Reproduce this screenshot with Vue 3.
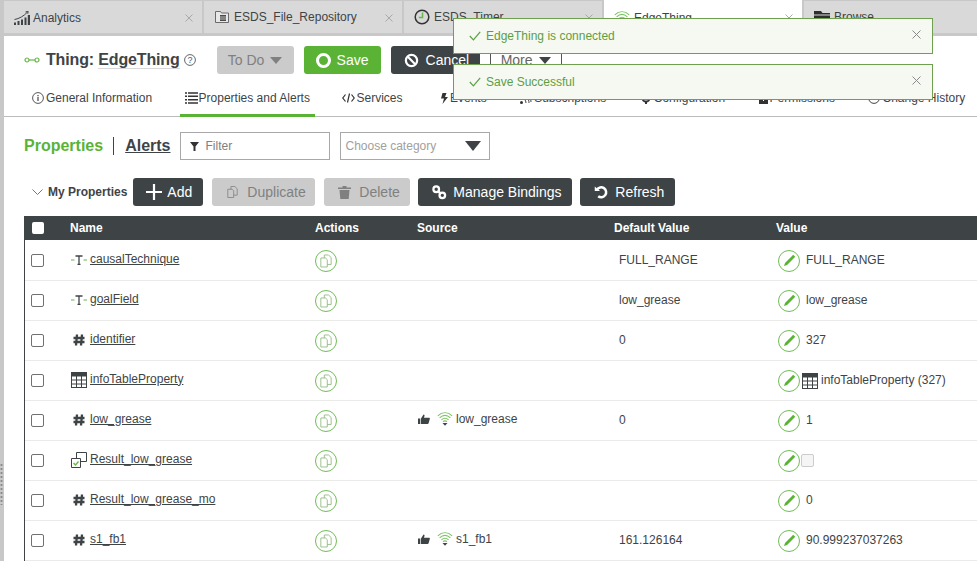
<script setup>
const tabs = [
  { label: 'Analytics', icon: 'chart' },
  { label: 'ESDS_File_Repository', icon: 'repo' },
  { label: 'ESDS_Timer', icon: 'clock' },
  { label: 'EdgeThing', icon: 'wifi', active: true },
  { label: 'Browse', icon: 'folder', last: true }
]
const nav = [
  { label: 'General Information', icon: 'info' },
  { label: 'Properties and Alerts', icon: 'list', active: true },
  { label: 'Services', icon: 'code' },
  { label: 'Events', icon: 'bolt' },
  { label: 'Subscriptions', icon: 'subs' },
  { label: 'Configuration', icon: 'gear' },
  { label: 'Permissions', icon: 'lock' },
  { label: 'Change History', icon: 'history' }
]
const rows = [
  { name: 'causalTechnique', type: 'text', def: 'FULL_RANGE', value: 'FULL_RANGE' },
  { name: 'goalField', type: 'text', def: 'low_grease', value: 'low_grease' },
  { name: 'identifier', type: 'num', def: '0', value: '327' },
  { name: 'infoTableProperty', type: 'table', def: '', value: 'infoTableProperty (327)', valueTable: true },
  { name: 'low_grease', type: 'num', source: 'low_grease', def: '0', value: '1' },
  { name: 'Result_low_grease', type: 'bool', def: '', value: '', valueCheck: true },
  { name: 'Result_low_grease_mo', type: 'num', def: '', value: '0' },
  { name: 's1_fb1', type: 'num', source: 's1_fb1', def: '161.126164', value: '90.999237037263' }
]
const toasts = ['EdgeThing is connected', 'Save Successful']
</script>

<template>
  <div class="page">
    <svg width="0" height="0" class="defs">
      <defs>
        <symbol id="i-copy" viewBox="0 0 14 16">
          <path d="M1 4.500h5.500l2 2V15H1z M5 4.500V1h5l3 3v8h-4.500" fill="none" stroke="currentColor" stroke-width="1" />
        </symbol>
        <symbol id="i-pencil" viewBox="0 0 14 14">
          <path d="M11 .8l2.200 2.200-8.800 8.800-3.400 1.200 1.200-3.400z" fill="currentColor" />
        </symbol>
        <symbol id="i-table" viewBox="0 0 16 16">
          <path d="M0 0h16v16H0z" fill="#3e4446" />
          <path d="M1 4.500h4v3H1zM6 4.500h4v3H6zM11 4.500h4v3h-4zM1 8.500h4v3H1zM6 8.500h4v3H6zM11 8.500h4v3h-4zM1 12.500h4V15H1zM6 12.500h4V15H6zM11 12.500h4V15h-4z" fill="#fff" />
        </symbol>
        <symbol id="i-wifi" viewBox="0 0 16 14">
          <path d="M.8 3.800c4.400-4 10-4 14.400 0M2.600 5.800c3.400-3 7.400-3 10.800 0M4.400 7.800c2.400-2 4.800-2 7.200 0M6 9.600c1.300-1 2.700-1 4 0" fill="none" stroke="#7cc463" stroke-width="1.100" />
          <path d="M5.500 11h5l-2.500 2.800z" fill="#3e4446" />
        </symbol>
        <symbol id="i-thumb" viewBox="0 0 12 10">
          <path d="M0 4.500h2.300V10H0zM3 4.500L5.500 0.500c1 0 1.300.8.900 1.800L6 3.800h5c.8 0 1 .6.800 1.200L10.600 9.300c-.2.500-.5.700-1 .700H3z" fill="#3e4446" />
        </symbol>
      </defs>
    </svg>

    <aside class="rail">
      <span class="grip"></span>
    </aside>

    <main class="main">
      <div class="tabs">
        <div v-for="t in tabs" :key="t.label" class="tab" :class="{ active: t.active, last: t.last }">
          <svg v-if="t.icon === 'chart'" class="tab-icon chart" width="16" height="14" viewBox="0 0 16 14">
            <path d="M0 11.500h2V14H0zM3.500 10h2v4h-2zM7 8.500h2V14H7zM10.500 6.500h2V14h-2zM13.800 4h2.200v10h-2.200z" fill="#3e4446" />
            <path d="M.5 8.500C5 7.800 10 5 13.500 1M11.500 1l2.600-.8-.3 2.600" fill="none" stroke="#3e4446" stroke-width="1" />
          </svg>
          <svg v-else-if="t.icon === 'repo'" class="tab-icon" width="16" height="14" viewBox="0 0 16 14">
            <path d="M1.500 1.500h5l1 1.500h7v9.500h-13z" fill="#e8e8e8" stroke="#6b6b6b" />
            <path d="M6 5h6v6H6z" fill="#4a4a4a" />
            <path d="M6 7h6M6 9h6" stroke="#ddd" stroke-width=".8" />
          </svg>
          <svg v-else-if="t.icon === 'clock'" class="tab-icon" width="16" height="16" viewBox="0 0 16 16">
            <circle cx="8" cy="8" r="6.800" fill="none" stroke="#333" stroke-width="1.500" />
            <path d="M8.500 3.500v5H4.800" fill="none" stroke="#66b848" stroke-width="1.500" />
          </svg>
          <svg v-else-if="t.icon === 'wifi'" class="tab-icon" width="16" height="14"><use href="#i-wifi" /></svg>
          <svg v-else class="tab-icon" width="16" height="13" viewBox="0 0 16 13">
            <path d="M0 0h7l1.500 2H16v1.500H0zM0 4.500h16V13H0z" fill="#2e2e2e" />
          </svg>
          <span class="tab-label">{{ t.label }}</span>
          <svg v-if="!t.last" class="tab-x" width="8" height="8" viewBox="0 0 8 8"><path d="M.5.500l7 7M7.500.500l-7 7" stroke="#a8a8a8" stroke-width="1" /></svg>
        </div>
      </div>

      <div class="title-row">
        <svg class="thing-icon" width="16" height="6" viewBox="0 0 16 6">
          <circle cx="3" cy="3" r="2" fill="none" stroke="#66b848" stroke-width="1.200" />
          <circle cx="13" cy="3" r="2" fill="none" stroke="#66b848" stroke-width="1.200" />
          <path d="M5 3h6" stroke="#66b848" stroke-width="1.200" />
        </svg>
        <h1 class="title">Thing: <span class="title-name">EdgeThing</span></h1>
        <svg class="help" width="12" height="12" viewBox="0 0 12 12">
          <circle cx="6" cy="6" r="5.400" fill="none" stroke="#555" stroke-width=".9" />
          <text x="6" y="9" text-anchor="middle" class="help-q">?</text>
        </svg>
        <button class="btn btn-todo">To Do <span class="caret caret-grey"></span></button>
        <button class="btn btn-save"><span class="ring"></span>Save</button>
        <button class="btn btn-cancel">
          <svg width="15" height="15" viewBox="0 0 16 16"><circle cx="8" cy="8" r="6" fill="none" stroke="#fff" stroke-width="2.400" /><path d="M3.800 3.800l8.400 8.400" stroke="#fff" stroke-width="2.400" /></svg>
          Cancel
        </button>
        <button class="btn btn-more">More <span class="caret"></span></button>
      </div>

      <nav class="nav">
        <a v-for="n in nav" :key="n.label" class="nav-item" :class="[n.icon, { active: n.active }]">
          <svg v-if="n.icon === 'info'" width="12" height="12" viewBox="0 0 12 12"><circle cx="6" cy="6" r="5.400" fill="none" stroke="#444" stroke-width=".9" /><path d="M6 5v4M6 3v1.200" stroke="#444" stroke-width="1.200" /></svg>
          <svg v-else-if="n.icon === 'list'" width="13" height="12" viewBox="0 0 13 12"><path d="M0 1h2M3 1h10M0 4.300h2M3 4.300h10M0 7.700h2M3 7.700h10M0 11h2M3 11h10" stroke="#333" stroke-width="1.500" /></svg>
          <svg v-else-if="n.icon === 'code'" width="13" height="10" viewBox="0 0 13 10"><path d="M3.500 1.500L.8 5l2.700 3.500M9.500 1.500L12.200 5 9.500 8.500M7.500.5l-2 9" fill="none" stroke="#333" stroke-width="1.200" /></svg>
          <svg v-else-if="n.icon === 'bolt'" width="8" height="11" viewBox="0 0 8 11"><path d="M2.500 0h4L5 4h3l-5.500 7L4 5.500H1z" fill="#333" /></svg>
          <svg v-else-if="n.icon === 'subs'" width="12" height="12" viewBox="0 0 12 12"><path d="M1 6c3 0 5 2 5 5M1 3c5 0 8 3 8 8M3 1c4 0 8 3 8 9" fill="none" stroke="#444" /><circle cx="1.500" cy="10.500" r="1.500" fill="#333" /></svg>
          <svg v-else-if="n.icon === 'gear'" width="12" height="12" viewBox="0 0 12 12"><circle cx="6" cy="6" r="3.600" fill="none" stroke="#333" stroke-width="2" /><path d="M6 0v2M6 10v2M0 6h2M10 6h2" stroke="#333" stroke-width="2" /></svg>
          <svg v-else-if="n.icon === 'lock'" width="9" height="12" viewBox="0 0 9 12"><path d="M0 4h9v8H0z" fill="#333" /><path d="M2 4V2.500a2.500 2 0 0 1 5 0V4" fill="none" stroke="#333" /><path d="M4.500 6v3" stroke="#fff" /></svg>
          <svg v-else width="12" height="12" viewBox="0 0 12 12"><circle cx="6" cy="6" r="5.400" fill="none" stroke="#444" /><path d="M6 3v3.300h2.500" fill="none" stroke="#444" /></svg>
          <span>{{ n.label }}</span>
        </a>
      </nav>

      <div class="filter-row">
        <a class="section on">Properties</a>
        <span class="divider"></span>
        <a class="section alerts">Alerts</a>
        <div class="field filter">
          <svg width="9" height="9" viewBox="0 0 9 9"><path d="M0 0h9L5.500 4.500V9h-2V4.500z" fill="#333" /></svg>
          <span>Filter</span>
        </div>
        <div class="field choose">
          <span>Choose category</span>
          <span class="caret caret-lg"></span>
        </div>
      </div>

      <div class="toolbar">
        <svg class="chev" width="11" height="6" viewBox="0 0 11 6"><path d="M.5.500l5 5 5-5" fill="none" stroke="#777" /></svg>
        <strong class="my-props">My Properties</strong>
        <button class="tbtn add"><svg width="16" height="16" viewBox="0 0 16 16"><path d="M8 0v16M0 8h16" stroke="#fff" stroke-width="2.200" /></svg>Add</button>
        <button class="tbtn off dup"><svg width="11" height="14"><use href="#i-copy" /></svg>Duplicate</button>
        <button class="tbtn off del"><svg width="13" height="14" viewBox="0 0 13 14"><path d="M0 2.500h13V4H0zM4.500 2.500V1h4v1.500zM1.500 5h10l-.8 9H2.300z" fill="currentColor" /></svg>Delete</button>
        <button class="tbtn bind"><svg width="15" height="15" viewBox="0 0 16 16"><circle cx="4.500" cy="4.500" r="3" fill="none" stroke="#fff" stroke-width="2.400" /><circle cx="11" cy="11" r="3" fill="none" stroke="#fff" stroke-width="2.400" /><path d="M6.500 6.500l3 3" stroke="#fff" stroke-width="2.400" /></svg>Manage Bindings</button>
        <button class="tbtn refresh"><svg width="14" height="14" viewBox="0 0 15 15"><path d="M3.200 5A5.300 5.300 0 1 1 4.500 12" fill="none" stroke="#fff" stroke-width="2.700" /><path d="M.8 1.500l5.700 5H.8z" fill="#fff" /></svg>Refresh</button>
      </div>

      <section class="table">
        <div class="grid head">
          <span class="head-check"></span>
          <span>Name</span>
          <span>Actions</span>
          <span>Source</span>
          <span>Default Value</span>
          <span>Value</span>
        </div>
        <div class="rows">
          <div v-for="r in rows" :key="r.name" class="grid row">
            <span class="check"></span>
            <div class="name">
              <span class="type">
                <svg v-if="r.type === 'text'" width="16" height="10" viewBox="0 0 16 10">
                  <path d="M0 5h3.500M12.500 5H16" stroke="#66b848" />
                  <path d="M4.500 1h7M8 1v8.500M6.500 9.500h3" stroke="#3e4446" stroke-width="1.300" fill="none" />
                </svg>
                <svg v-else-if="r.type === 'num'" width="12" height="12" viewBox="0 0 12 12">
                  <path d="M4 .5L3 11.500M9 .5L8 11.500M.5 4h11M.5 8h11" stroke="#3e4446" stroke-width="2.300" fill="none" />
                </svg>
                <svg v-else-if="r.type === 'table'" width="16" height="16"><use href="#i-table" /></svg>
                <svg v-else width="16" height="16" viewBox="0 0 16 16">
                  <path d="M5.500.5h10v9h-10z" fill="#fff" stroke="#3e4446" />
                  <path d="M.5 6.500h9v9h-9z" fill="#fff" stroke="#3e4446" />
                  <path d="M2.500 11l2 2 3-3.500" fill="none" stroke="#66b848" stroke-width="1.400" />
                </svg>
              </span>
              <a class="prop-link">{{ r.name }}</a>
            </div>
            <div class="action">
              <span class="circle"><svg width="12" height="14"><use href="#i-copy" /></svg></span>
            </div>
            <div class="source">
              <template v-if="r.source">
                <svg class="thumb" width="12" height="10"><use href="#i-thumb" /></svg>
                <svg class="src-wifi" width="16" height="14"><use href="#i-wifi" /></svg>
                <span>{{ r.source }}</span>
              </template>
            </div>
            <div class="default">{{ r.def }}</div>
            <div class="value">
              <span class="circle pen"><svg width="13" height="13"><use href="#i-pencil" /></svg></span>
              <svg v-if="r.valueTable" class="val-table" width="16" height="16"><use href="#i-table" /></svg>
              <span v-if="r.valueCheck" class="val-check"></span>
              <span v-if="r.value" class="val-text">{{ r.value }}</span>
            </div>
          </div>
        </div>
      </section>
    </main>

    <div class="toasts">
      <div v-for="t in toasts" :key="t" class="toast">
        <svg width="12" height="10" viewBox="0 0 12 10"><path d="M.8 5l3.600 3.800L11.200.8" fill="none" stroke="#5d9e45" stroke-width="1.200" /></svg>
        <span>{{ t }}</span>
        <svg class="toast-x" width="9" height="9" viewBox="0 0 9 9"><path d="M.5.500l8 8M8.500.500l-8 8" stroke="#8a8a8a" stroke-width="1" /></svg>
      </div>
    </div>
  </div>
</template>

<style>
html, body { margin: 0; background: #fff; }
</style>

<style scoped>
.page {
  position: relative;
  display: flex;
  width: 977px;
  height: 561px;
  overflow: hidden;
  background: #fff;
  color: #3e4446;
  font-family: "Liberation Sans", Arial, sans-serif;
  font-size: 12px;
}
.defs { position: absolute; }
.rail {
  flex: 0 0 4px;
  background: #c8c8c8;
  display: flex;
  align-items: flex-start;
}
.grip {
  margin-top: 463px;
  width: 3px;
  height: 42px;
  background-image: radial-gradient(circle, #8a8a8a 1px, transparent 1.200px);
  background-size: 3px 4px;
}
.main {
  flex: 1;
  min-width: 0;
  display: flex;
  flex-direction: column;
}

.tabs {
  display: flex;
  gap: 2px;
  height: 36px;
  background: #c8c8c8;
  flex: none;
  box-sizing: border-box;
  padding-top: 1px;
  padding-bottom: 3px;
}
.tab {
  flex: 0 0 198px;
  background: #d9d9d9;
  display: flex;
  align-items: center;
  padding-left: 10px;
  box-sizing: border-box;
  position: relative;
  color: #3e4446;
  font-size: 12px;
}
.tab.active {
  margin-top: -1px;
  margin-bottom: -3px;
  background: #fff;
}
.tab.last { flex: 1; }
.tab-icon { flex: none; margin-right: 4px; }
.tab-icon.chart { margin-right: 3px; margin-top: 2px; }
.tab-icon.chart + .tab-label { margin-top: 2px; }
.tab-label { white-space: nowrap; }
.tab-x {
  position: absolute;
  right: 9px;
  top: 13px;
}
.tab.active .tab-x { top: 14px; }

.title-row {
  flex: none;
  height: 30px;
  margin-top: 9px;
  display: flex;
  align-items: center;
  padding-left: 20px;
}
.thing-icon { flex: none; margin-right: 6px; }
.title {
  margin: 0;
  font-size: 16px;
  line-height: 18px;
  letter-spacing: -0.15px;
  font-weight: 700;
  color: #3e4446;
  white-space: nowrap;
}
.title-name { border-bottom: 1px solid #d8d8d8; }
.help { margin-left: 4px; flex: none; margin-right: 21px; }
.help-q { font: 9px "Liberation Sans", sans-serif; fill: #555; }
.btn {
  height: 28px;
  border: 0;
  border-radius: 3px;
  padding: 0;
  font: 14px "Liberation Sans", Arial, sans-serif;
  display: inline-flex;
  align-items: center;
  justify-content: center;
  gap: 6px;
  flex: none;
}
.btn-todo { width: 77px; background: #cbcbcb; color: #808080; margin-right: 10px; }
.btn-save { width: 77px; background: #5bb336; color: #fff; margin-right: 10px; }
.btn-cancel { width: 89px; background: #3e4446; color: #fff; justify-content: flex-start; padding-left: 13px; margin-right: 10px; border-radius: 3px 0 0 3px; gap: 7px; }
.btn-more {
  width: 72px;
  background: #fff;
  color: #666;
  border-left: 1px solid #555;
  border-right: 1px solid #555;
  border-radius: 0;
}
.ring {
  width: 9px;
  height: 9px;
  border: 3px solid #fff;
  border-radius: 50%;
  display: inline-block;
}
.caret {
  display: inline-block;
  width: 0;
  height: 0;
  border-left: 6px solid transparent;
  border-right: 6px solid transparent;
  border-top: 7px solid #3e4446;
}
.caret-grey { border-top-color: #808080; }
.caret-lg { border-left-width: 8px; border-right-width: 8px; border-top-width: 10px; }

.nav {
  flex: none;
  display: flex;
  gap: 23.500px;
  height: 35px;
  margin-top: 7px;
  box-sizing: border-box;
  padding-left: 23px;
  border-bottom: 1px solid #bbb;
  white-space: nowrap;
}
.nav-item {
  padding: 0 5px 3px;
  height: 35px;
  display: flex;
  align-items: center;
  gap: 2px;
  box-sizing: border-box;
  flex: none;
  color: #3e4446;
}
.nav-item.active { border-bottom: 3px solid #5bb336; padding-bottom: 0; }
.nav-item.list { margin-left: -1px; gap: 1px; }
.nav-item.code { margin-left: -1px; gap: 1px; margin-right: 4px; }

.filter-row {
  flex: none;
  height: 28px;
  margin-top: 15px;
  padding-left: 20px;
  display: flex;
  align-items: center;
}
.section { font-size: 16px; font-weight: 700; }
.section.on { color: #5bb336; }
.divider { width: 1px; height: 18px; background: #3e4446; margin: 0 11px 0 10px; }
.alerts { text-decoration: underline; }
.field {
  height: 28px;
  box-sizing: border-box;
  border: 1px solid #a8a8a8;
  width: 150px;
  display: flex;
  align-items: center;
  color: #808080;
}
.filter { margin-left: 9px; padding-left: 9px; gap: 7px; }
.choose { margin-left: 10px; padding: 0 8px 0 5px; justify-content: space-between; color: #a0a0a0; }

.toolbar {
  flex: none;
  height: 28px;
  margin-top: 18px;
  padding-left: 28px;
  display: flex;
  align-items: center;
}
.chev { flex: none; margin-right: 5px; }
.my-props { font-size: 12px; margin-right: 6px; white-space: nowrap; }
.tbtn {
  height: 28px;
  border: 0;
  border-radius: 3px;
  background: #3e4446;
  color: #fff;
  font: 14px "Liberation Sans", Arial, sans-serif;
  display: flex;
  align-items: center;
  padding: 0;
  justify-content: flex-start;
  flex: none;
}
.tbtn.off { background: #cbcbcb; color: #808080; }
.add { width: 70px; gap: 5px; padding-left: 13px; margin-right: 9px; }
.dup { width: 103px; gap: 9px; padding-left: 15px; margin-right: 9px; }
.del { width: 86px; gap: 8px; padding-left: 14px; margin-right: 8px; }
.bind { width: 154px; gap: 6px; padding-left: 14px; margin-right: 8px; }
.refresh { width: 95px; gap: 7px; padding-left: 14px; }

.table {
  flex: none;
  margin-top: 10px;
  margin-left: 20px;
  border-left: 1px solid #3e4446;
}
.grid {
  display: grid;
  grid-template-columns: 45px 245px 102px 197px 162px 1fr;
  align-items: center;
}
.head {
  height: 24px;
  margin-left: -1px;
  padding-left: 1px;
  background: #3e4446;
  color: #fff;
  font-weight: 700;
}
.head-check {
  width: 12px;
  height: 12px;
  margin-left: 7px;
  background: #fff;
  border-radius: 2px;
}
.rows { padding-top: 1px; }
.row {
  height: 40px;
  box-sizing: border-box;
  border-bottom: 1px solid #eaeaea;
}
.check {
  width: 11px;
  height: 11px;
  margin-left: 6px;
  border: 1px solid #707070;
  border-radius: 2px;
}
.name { display: flex; align-items: center; margin-top: -4px; }
.type {
  width: 16px;
  margin-left: 1px;
  margin-right: 3px;
  display: flex;
  justify-content: center;
  margin-top: 2px;
}
.prop-link { text-decoration: underline; white-space: nowrap; }
.action { display: flex; }
.circle {
  width: 22px;
  height: 22px;
  border: 1.200px solid #72bd58;
  border-radius: 50%;
  display: flex;
  align-items: center;
  justify-content: center;
  color: #8fb87e;
  box-sizing: border-box;
  flex: none;
}
.pen { color: #5bb336; margin-right: 6px; }
.source { display: flex; align-items: center; margin-top: -3px; }
.thumb { margin-left: 1px; }
.src-wifi { margin: 0 3px 0 7px; }
.default { padding-left: 5px; margin-top: -2px; }
.value { display: flex; align-items: center; margin-left: 2px; white-space: nowrap; }
.val-text { margin-top: -2px; }
.val-table { margin-left: -4px; margin-right: 3px; }
.val-check {
  width: 11px;
  height: 11px;
  margin-left: -5px;
  border: 1px solid #ccc;
  border-radius: 2px;
  background: #f5f5f5;
}

.toasts {
  position: absolute;
  left: 453px;
  top: 18px;
  width: 480px;
  display: flex;
  flex-direction: column;
  gap: 10px;
}
.toast {
  position: relative;
  height: 36px;
  box-sizing: border-box;
  background: #f5f9f2;
  border: 1px solid #6ea04f;
  color: #5d9e45;
  display: flex;
  align-items: center;
  gap: 5px;
  padding-left: 15px;
}
.toast-x { position: absolute; right: 11px; top: 11px; }
</style>
